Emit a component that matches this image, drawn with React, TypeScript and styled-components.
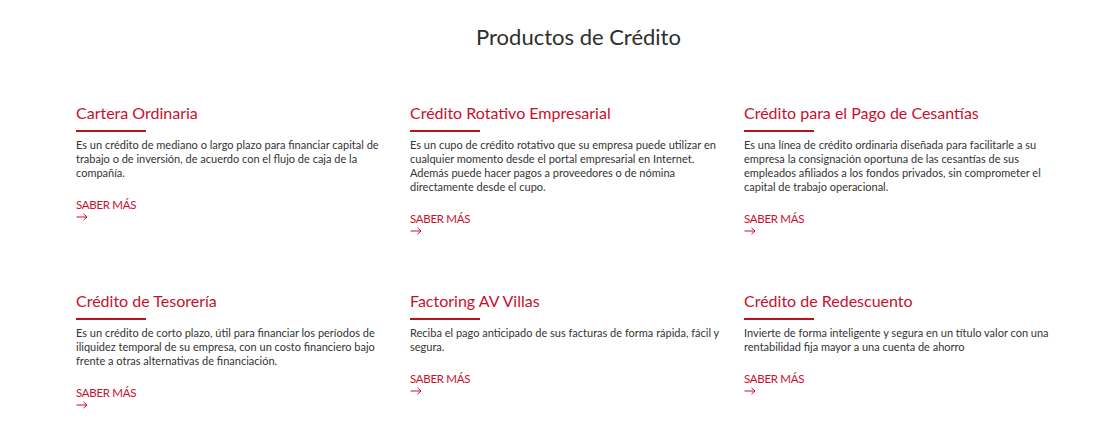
import React from "react";
import styled, { createGlobalStyle } from "styled-components";

const Global = createGlobalStyle`
  html, body { margin: 0; padding: 0; background: #ffffff; }
  body { font-family: "Lato", "Noto Sans", sans-serif; -webkit-font-smoothing: antialiased; }
`;

const Page = styled.main`
  width: 1113px;
  padding-top: 22px;
  box-sizing: border-box;
`;

const Title = styled.h1`
  margin: 0;
  text-align: center;
  font-size: 22px;
  line-height: 30px;
  font-weight: 400;
  color: #2e2e2e;
  padding-left: 44px;
`;

const Grid = styled.section`
  display: grid;
  grid-template-columns: repeat(3, 309px);
  column-gap: 25px;
  row-gap: 54px;
  padding-left: 76px;
  margin-top: 49px;
`;

const Card = styled.article`
  display: flex;
  flex-direction: column;
  align-items: flex-start;
`;

const CardTitle = styled.h2`
  margin: 0;
  font-size: 16px;
  line-height: 22px;
  font-weight: 400;
  color: #c8102e;
  padding-top: 1px;
`;

const Rule = styled.span`
  display: block;
  width: 70px;
  height: 2px;
  margin-top: 6px;
  background: #b8141f;
`;

const Body = styled.p`
  margin: 6px 0 0;
  font-size: 11px;
  line-height: 14px;
  color: #333333;
`;

const More = styled.a`
  margin-top: 18px;
  display: flex;
  flex-direction: column;
  color: #c8102e;
  text-decoration: none;
  font-size: 11.5px;
  letter-spacing: -0.3px;
  line-height: 14px;
  cursor: pointer;
`;

const Arrow = styled.svg`
  display: block;
  margin-top: 1px;
`;

const items = [
  {
    title: "Cartera Ordinaria",
    text: "Es un crédito de mediano o largo plazo para financiar capital de trabajo o de inversión, de acuerdo con el flujo de caja de la compañía.",
  },
  {
    title: "Crédito Rotativo Empresarial",
    text: "Es un cupo de crédito rotativo que su empresa puede utilizar en cualquier momento desde el portal empresarial en Internet. Además puede hacer pagos a proveedores o de nómina directamente desde el cupo.",
  },
  {
    title: "Crédito para el Pago de Cesantías",
    text: "Es una línea de crédito ordinaria diseñada para facilitarle a su empresa la consignación oportuna de las cesantías de sus empleados afiliados a los fondos privados, sin comprometer el capital de trabajo operacional.",
  },
  {
    title: "Crédito de Tesorería",
    text: "Es un crédito de corto plazo, útil para financiar los períodos de iliquidez temporal de su empresa, con un costo financiero bajo frente a otras alternativas de financiación.",
  },
  {
    title: "Factoring AV Villas",
    text: "Reciba el pago anticipado de sus facturas de forma rápida, fácil y segura.",
  },
  {
    title: "Crédito de Redescuento",
    text: "Invierte de forma inteligente y segura en un título valor con una rentabilidad fija mayor a una cuenta de ahorro",
  },
];

export default function App() {
  return (
    <>
      <Global />
      <Page>
        <Title>Productos de Crédito</Title>
        <Grid>
          {items.map((it) => (
            <Card key={it.title}>
              <CardTitle>{it.title}</CardTitle>
              <Rule />
              <Body>{it.text}</Body>
              <More>
                SABER MÁS
                <Arrow width="12" height="8" viewBox="0 0 12 8" fill="none">
                  <path d="M0.5 4H11M7.5 0.8L11 4L7.5 7.2" stroke="#c8102e" strokeWidth="1" />
                </Arrow>
              </More>
            </Card>
          ))}
        </Grid>
      </Page>
    </>
  );
}
